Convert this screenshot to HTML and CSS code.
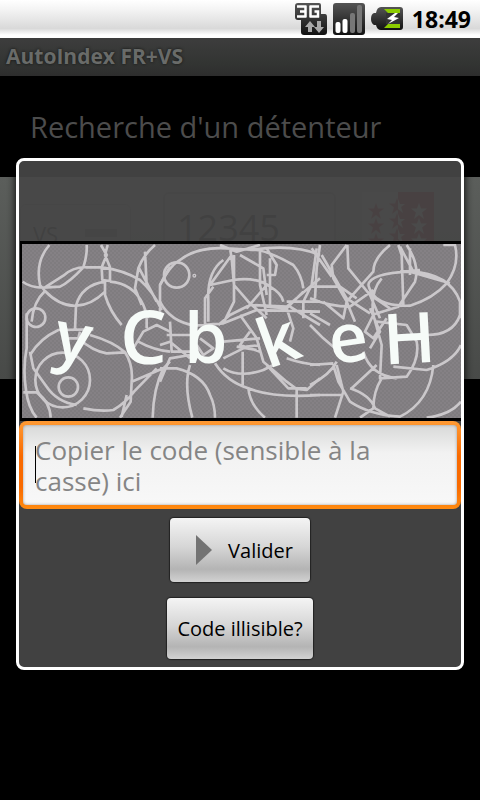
FILE: index.html
```html
<!DOCTYPE html>
<html lang="fr">
<head>
<meta charset="utf-8">
<meta name="viewport" content="width=device-width, initial-scale=1">
<title>AutoIndex FR+VS</title>
<link rel="stylesheet" href="styles.css">
</head>
<body>
<header class="status-bar">
  <svg class="status-icon" viewBox="0 0 32 32" aria-hidden="true">
    <defs>
      <linearGradient id="dark" x1="0" y1="0" x2="0" y2="1"><stop offset="0" stop-color="#555"/><stop offset="1" stop-color="#111"/></linearGradient>
    </defs>
    <path d="M3 0H24Q26 0 26 2V11H30Q32 11 32 14V29Q32 32 29 32H9Q6 32 6 29V17H3Q0 17 0 14V3Q0 0 3 0Z" fill="url(#dark)"/>
    <path d="M2 3.500H11M2 13.500H11M5 8.500H11M10.500 2.500V14.500M24 3.500H15M24 13.500H15M15.500 2.500V14.500M23 14.500V8.500H19.500" fill="none" stroke="#fff" stroke-width="2.500"/>
    <path d="M15 18L20 24H17V29H13V24H10Z" fill="#aaa"/>
    <path d="M24 30L19 24H22V18H26V24H29Z" fill="#aaa"/>
  </svg>
  <svg class="status-icon" viewBox="0 0 32 32" aria-hidden="true">
    <rect width="32" height="32" rx="3" fill="url(#dark)"/>
    <rect x="2.500" y="19" width="5" height="11" rx="2" fill="#fff"/>
    <rect x="9.500" y="16" width="5" height="14" rx="2" fill="#fff"/>
    <rect x="17" y="10" width="5" height="20" rx="2" fill="#777"/>
    <rect x="24" y="2" width="5" height="28" rx="2" fill="#777"/>
  </svg>
  <svg class="status-icon" viewBox="0 0 32 32" aria-hidden="true">
    <path d="M10 4H29Q32 4 32 7V24Q32 27 29 27H10Q6 27 5 22H3Q0 20 0 16Q0 11 3 10H5Q6 4 10 4Z" fill="url(#dark)"/>
    <path d="M13 6H29V10H17ZM13 25H29V21H17Z" fill="#8ccc00"/>
    <rect x="15" y="10" width="14" height="11" fill="#333"/>
    <path d="M24 10L16 16L21 17L17 21L28 15L23 14L27 10Z" fill="#fff"/>
  </svg>
  <time class="clock">18:49</time>
</header>
<div class="title-bar">AutoIndex FR+VS</div>
<main>
  <h1 class="heading">Recherche d'un détenteur</h1>
  <section class="search-band">
    <select class="canton" aria-label="Canton"><option>VS</option></select>
    <input class="plate" type="text" value="12345" aria-label="Numéro de plaque">
    <svg class="flag" viewBox="0 0 72 72" aria-hidden="true">
      <rect width="36" height="72" fill="#666"/>
      <rect x="36" width="36" height="72" fill="#600c14"/>
      <defs><path id="star" d="M0 -8L2 -2.500H8L3 1.500L5 8L0 4L-5 8L-3 1.500L-8 -2.500H-2Z"/></defs>
      <g fill="#600c14">
        <use href="#star" x="14" y="19"/><use href="#star" x="14" y="34"/><use href="#star" x="14" y="49"/>
        <use href="#star" x="35" y="14"/><use href="#star" x="35" y="29"/><use href="#star" x="35" y="44"/>
      </g>
      <g fill="#777">
        <use href="#star" x="57" y="19"/><use href="#star" x="57" y="34"/><use href="#star" x="57" y="49"/>
        <path d="M36 7L38 12H43L39 15L41 21L36 17ZM36 22L38 27H43L39 30L41 36L36 32ZM36 37L38 42H43L39 45L41 51L36 47Z"/>
      </g>
    </svg>
  </section>
</main>

<div class="overlay">
  <form class="dialog" role="dialog" aria-label="Code">
    <svg class="captcha" viewBox="19 241 442 180" role="img" aria-label="Code">
      <defs>
        <pattern id="grain" width="4" height="4" patternUnits="userSpaceOnUse">
          <rect width="4" height="4" fill="#858185"/><path d="M0 0h2v2h-2zM2 2h2v2h-2z" fill="#7f7c7f"/>
        </pattern>
        <clipPath id="frame"><rect x="22" y="244" width="439" height="174"/></clipPath>
      </defs>
      <rect x="20" y="241" width="441" height="180" fill="#000"/>
      <rect x="22" y="244" width="439" height="174" fill="url(#grain)"/>
      <g clip-path="url(#frame)" fill="none" stroke="#cbc8cb" stroke-width="8" stroke-linejoin="round">
        <g transform="translate(10 235) scale(.33333)">
          <circle cx="78" cy="248" r="28"/><circle cx="175" cy="456" r="29"/><circle cx="158" cy="435" r="82"/>
          <path d="M118 30Q75 80 90 150L105 168Q150 215 200 212Q245 210 285 170M38 140Q60 158 100 158L150 155Q180 140 220 97Q232 60 230 30M100 160L160 122Q190 95 230 97L275 97Q340 105 390 135Q430 170 455 225M273 30L290 60L275 97L277 135L300 138L300 97L285 60L293 30M285 140Q215 150 198 212L195 285M300 140Q370 145 400 210L415 250M285 140L285 180Q300 230 335 270M105 168Q70 200 65 260M50 235L50 340Q38 400 48 465Q55 520 80 548M60 360Q90 310 145 285L250 283M60 350L70 400L110 455Q140 500 200 510M210 290L205 310Q250 350 290 355L345 352M175 310H205M240 300Q310 320 345 352Q370 390 365 440L362 500L330 548M220 520Q270 530 310 525Q350 500 372 470L440 400M40 472L80 472Q120 500 122 548M435 30Q400 60 385 100L375 160L395 210M405 50L410 150M385 95L440 200M480 95L450 150L450 230M365 440L460 400L480 380M460 400Q430 460 428 548M370 340L400 290L440 270L480 290M385 320Q430 345 480 350M410 240L410 280M350 480L335 545"/>
        </g>
        <g transform="translate(160 235) scale(.33333)">
          <circle cx="50" cy="120" r="38"/><circle cx="103" cy="122" r="2"/>
          <path d="M0 150Q30 90 60 75Q110 35 200 40L290 45Q330 50 400 90Q425 120 430 160M180 30L230 50L300 30M270 45Q400 25 480 60M160 155L135 190L135 270M190 75Q140 110 145 200L145 260M210 40L215 70L222 150L265 200L320 250M215 60L150 150L220 135Q290 125 330 155Q365 175 370 200M222 60L222 200L190 265M300 40L300 150L320 240M320 40L350 90L345 120L320 120M240 60L310 100L320 180M175 270L210 240L270 210L380 215L480 130M320 215L380 220L430 170M330 70L330 210M320 150L260 220M0 200Q30 260 105 272L190 265L290 225L480 230M380 200H480M30 260L35 350L90 350M20 300L90 300M0 330L30 320L90 370M0 400L50 400Q130 420 150 480Q165 510 165 548M90 390Q70 450 97 548M0 440L30 370L90 360M165 385Q200 440 265 460Q340 490 480 480M265 460Q270 510 315 548M190 400Q240 430 310 405L340 390M248 350L248 450M190 320L300 310M190 370L260 335L300 330M230 335L290 345M120 310L160 340L130 360L110 330M240 240L290 310L310 380L380 440L410 462L440 465L480 430M320 390L385 460L440 460M410 462L410 548M380 220L400 280L390 320M380 370Q430 388 480 390M390 215L430 240L480 270M470 40L455 150L430 200L430 250M270 290L240 330L300 350"/>
        </g>
        <g transform="translate(310 235) scale(.33333)">
          <path d="M30 30L20 100L15 190M5 40L65 125M35 60L110 190L180 235M110 30L65 90L70 130L110 200M112 30L115 100L180 180L210 250M0 155L90 155L140 190M0 190Q60 215 120 215L190 165M175 150Q180 115 300 110Q420 115 450 200L450 250M175 150Q190 215 300 212Q370 190 410 145Q450 90 435 30L400 30M240 30Q190 70 190 110L110 200M265 30L275 60L280 210M290 30Q330 90 315 140L265 215L185 240M270 35L310 110M300 40L300 120M270 110L330 105M300 110L420 145M215 130Q180 170 190 240M180 180L240 220M190 240L215 330L210 430L290 425Q330 370 320 320L290 270L200 260M160 350Q180 420 260 430M250 395L350 405Q430 380 453 330M350 300Q430 300 450 240M370 390Q360 500 270 545Q180 540 120 500L85 440L70 390M200 390L125 460M120 460Q180 480 195 520L240 545M215 430Q190 470 190 520L150 548M80 380Q60 420 0 450M80 390L100 470L75 548M0 390L70 385M0 480L100 480M350 548Q420 540 453 500M0 270L40 310L75 340M0 235L60 270M40 200L100 250L110 200L135 260M190 240L165 290L190 310L230 250M180 220L210 290L180 340"/>
        </g>
      </g>
      <g class="captcha-letters">
        <text x="54" y="361" font-size="68" transform="rotate(10 74 345)">y</text>
        <text x="120" y="364" font-size="74">C</text>
        <text x="184" y="363" font-size="70">b</text>
        <text x="259" y="364" font-size="68" transform="rotate(-20 278 342)">k</text>
        <text x="329" y="362" font-size="68" transform="rotate(-8 349 344)">e</text>
        <text x="383" y="363" font-size="70" transform="rotate(-3 410 338)">H</text>
      </g>
    </svg>
    <div class="field">
      <textarea class="code-input" rows="2" aria-label="Code" placeholder="Copier le code (sensible à la casse) ici"></textarea>
      <span class="caret"></span>
    </div>
    <div class="actions">
      <button class="button submit" type="button">
        <svg class="play" viewBox="0 0 16 30" aria-hidden="true"><path d="M0 0L16 15L0 30Z" fill="#737373"/></svg>
        Valider
      </button>
      <button class="button" type="button">Code illisible?</button>
    </div>
  </form>
</div>
</body>
</html>
```
FILE: styles.css
```css
* {
  box-sizing: border-box;
}

body {
  margin: 0;
  min-height: 100vh;
  background: #000;
  font-family: "Open Sans", "Noto Sans", sans-serif;
}

.status-bar {
  display: flex;
  align-items: center;
  justify-content: flex-end;
  gap: 6px;
  height: 38px;
  padding-right: 9px;
  background: linear-gradient(#fff, #f4f4f4 25%, #d9d9d9 75%, #fff 92%);
}

.status-icon {
  width: 32px;
  height: 32px;
}

.clock {
  margin-left: 3px;
  color: #000;
  font-size: 23px;
  font-weight: 700;
}

.title-bar {
  height: 38px;
  padding-left: 6px;
  background: linear-gradient(#3d3d3d, #323432 70%, #2d2d2d);
  color: #696b69;
  font-size: 21px;
  font-weight: 700;
  line-height: 37px;
  text-shadow: 0 0 3px #111;
}

.heading {
  margin: 0;
  padding: 30px 30px 29px;
  color: #4c4c4c;
  font-size: 29px;
  font-weight: 400;
  line-height: 42px;
}

.search-band {
  display: flex;
  align-items: flex-start;
  height: 202px;
  padding: 15px 46px 0 20px;
  background: linear-gradient(#5b5e5b, #484a48);
}

.canton {
  width: 111px;
  height: 60px;
  margin-top: 12px;
  padding: 0 12px;
  border: 1px solid #484848;
  border-radius: 6px;
  appearance: none;
  background: linear-gradient(#333, #333) 64px 24px / 32px 8px no-repeat #5e5e5e;
  color: #000;
  font: 22px "Open Sans", sans-serif;
}

.plate {
  width: 173px;
  height: 70px;
  margin-left: 32px;
  padding: 0 12px;
  border: 2px solid #484848;
  border-radius: 6px;
  background: #5e5e5e;
  color: #000;
  font: 36px "Open Sans", sans-serif;
}

.flag {
  width: 72px;
  height: 72px;
  margin-left: auto;
}

.overlay {
  position: absolute;
  inset: 38px 0 0;
  display: flex;
  align-items: center;
  padding: 0 16px 10px;
}

.dialog {
  flex: 1;
  min-width: 0;
  padding-top: 80px;
  border: 3px solid #fff;
  border-radius: 8px;
  background: rgba(71, 71, 71, 0.92);
  box-shadow: 0 0 8px #000;
}

.captcha {
  display: block;
  width: 100%;
}

.captcha-letters {
  fill: #f6fbf8;
  font-family: "Open Sans", sans-serif;
  font-weight: 600;
}

.field {
  position: relative;
  padding: 4px;
  border-radius: 8px;
  background: linear-gradient(#ff9b35, #f96a00 40%, #f96a00 75%, #ff8a10);
}

.code-input {
  display: block;
  width: 100%;
  height: 80px;
  padding: 10px 12px;
  border: 0;
  border-radius: 4px;
  background: linear-gradient(#d8d9d8, #f2f2f2 35%, #f8f8f8);
  box-shadow: inset 0 0 3px #999;
  font: 26px/31px "Open Sans", "Noto Sans", sans-serif;
  overflow: hidden;
  resize: none;
}

.code-input::placeholder {
  color: #858585;
  opacity: 1;
}

.caret {
  position: absolute;
  top: 25px;
  left: 16px;
  width: 1px;
  height: 37px;
  background: #000;
}

.actions {
  display: flex;
  flex-direction: column;
  align-items: center;
  gap: 16px;
  padding: 9px 0 8px;
}

.button {
  display: flex;
  align-items: center;
  height: 61px;
  padding: 0 10px;
  border: 0;
  border-radius: 4px;
  background: linear-gradient(#f4f4f4, #d6d6d6 45%, #b4b4b4 80%, #d2d2d2);
  box-shadow: 0 0 1px 1px #222;
  color: #000;
  font: 20px "Open Sans", "Noto Sans", sans-serif;
}

.submit {
  gap: 16px;
  height: 64px;
  padding: 0 17px 0 26px;
}

.play {
  width: 16px;
  height: 30px;
}
```
